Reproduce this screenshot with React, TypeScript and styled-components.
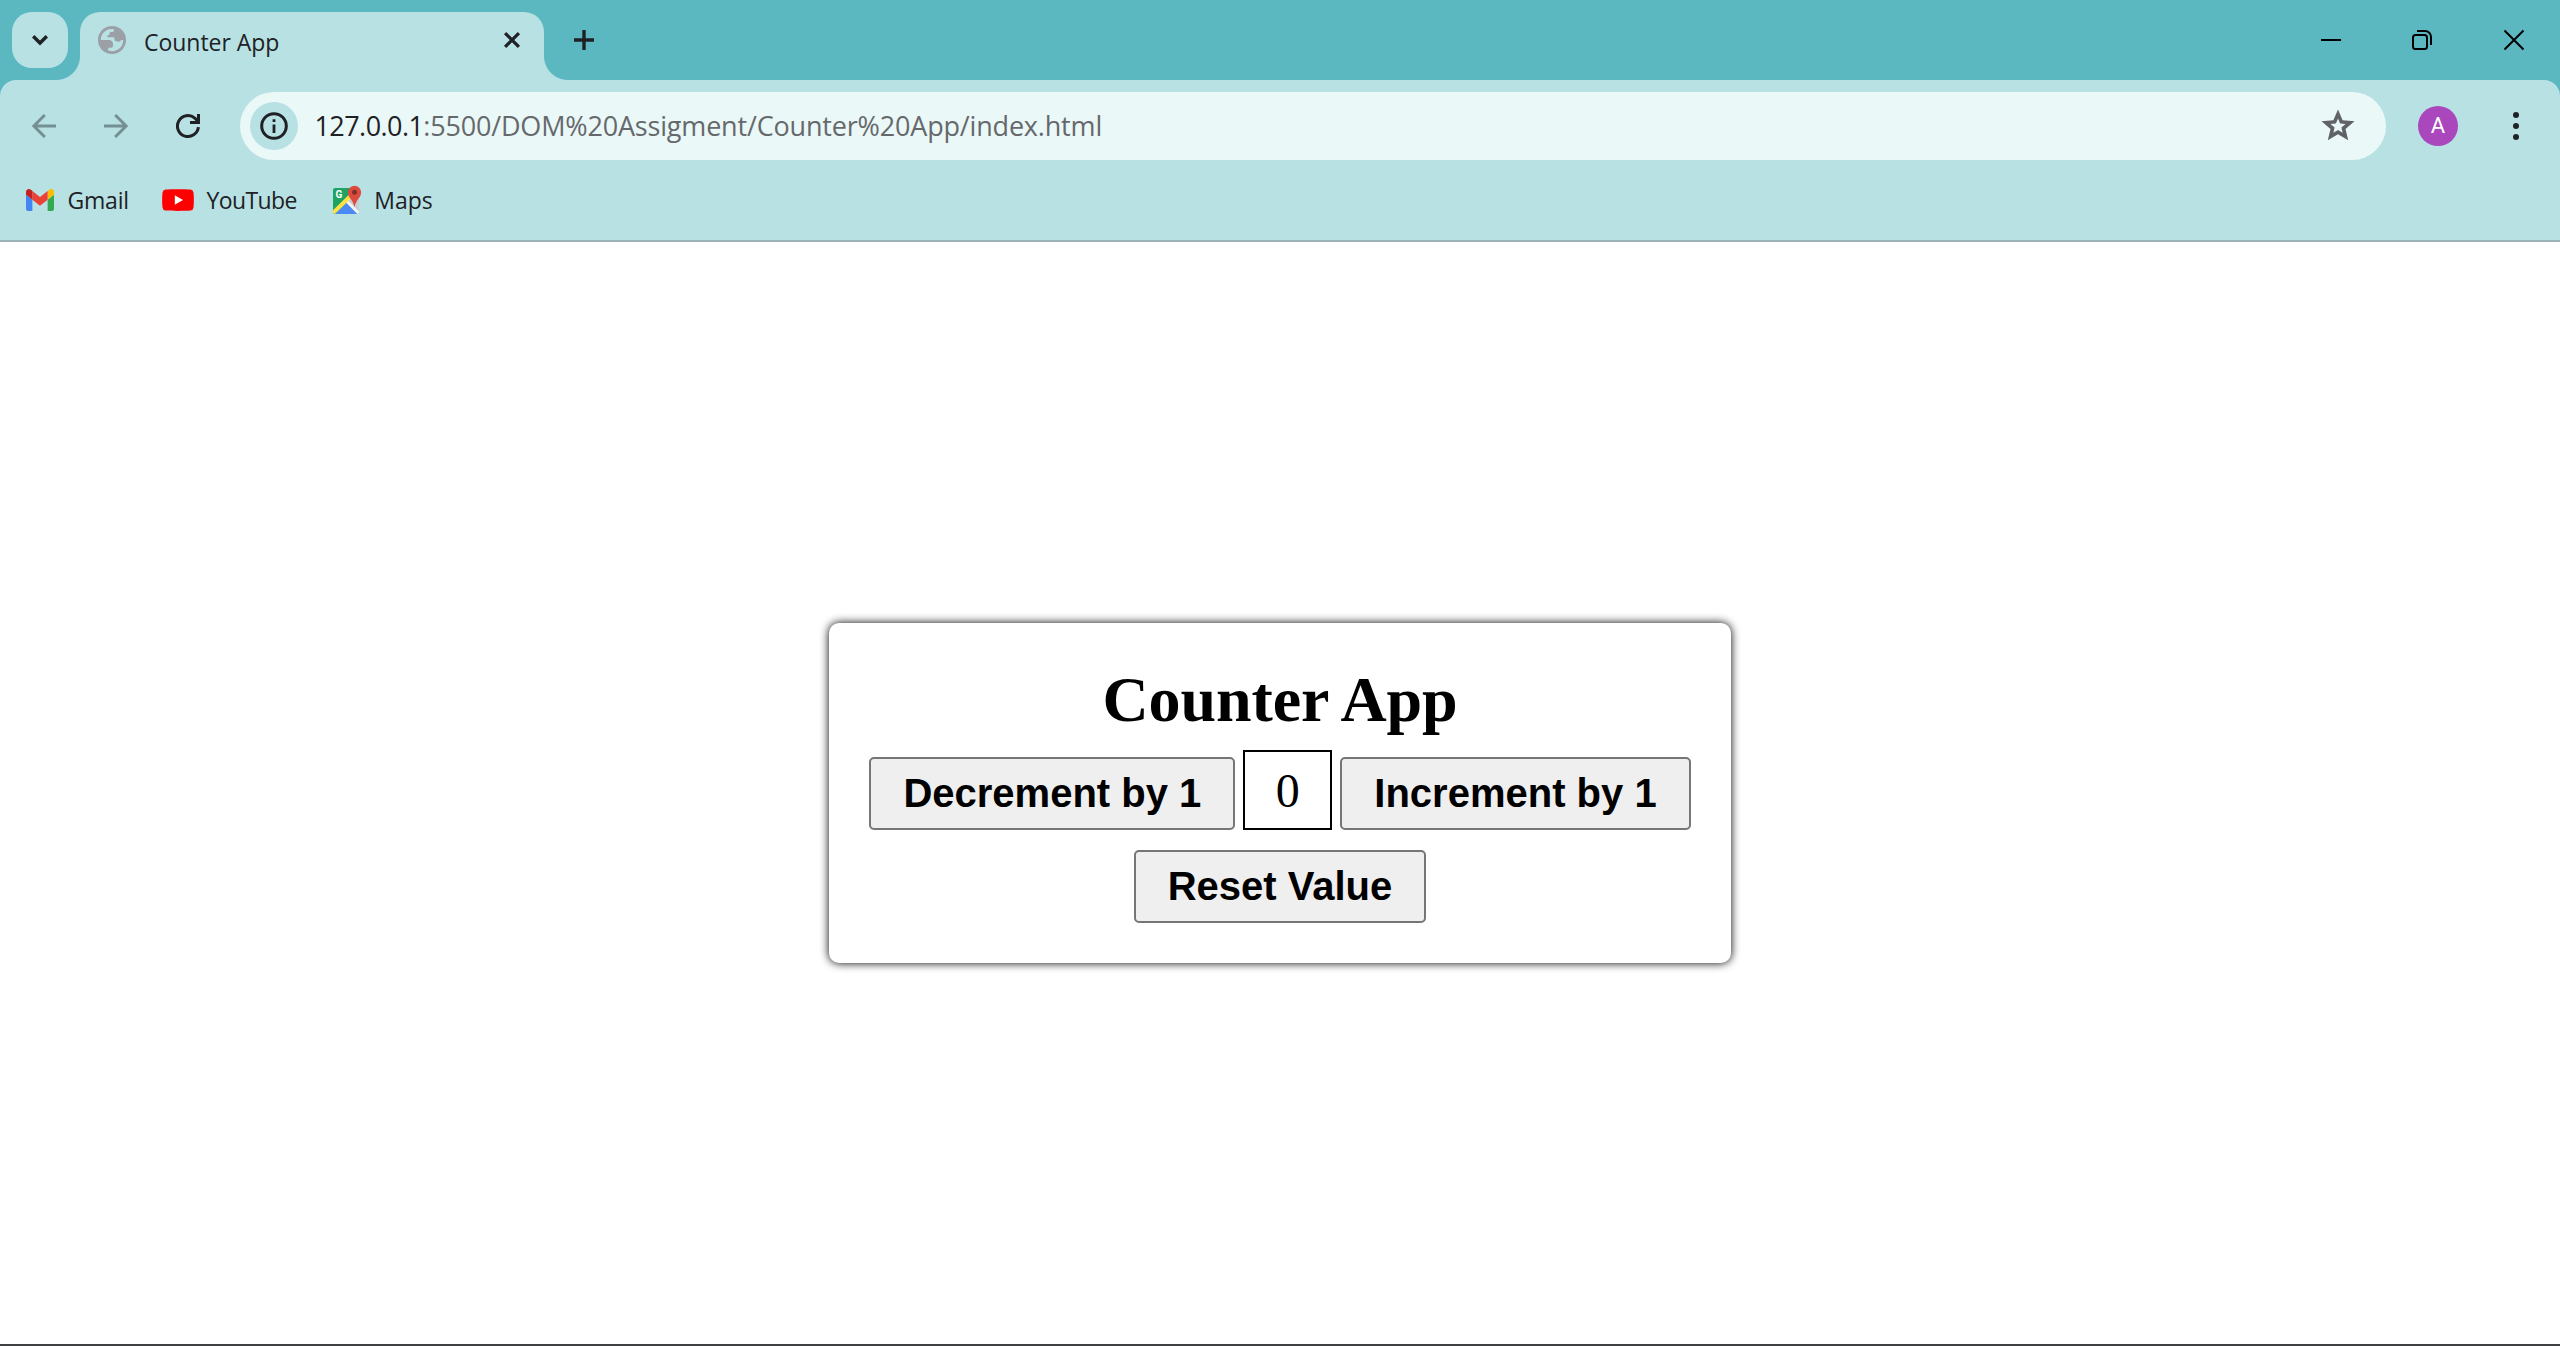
import React, { useState } from 'react';
import styled, { createGlobalStyle } from 'styled-components';

const color = {
  frame: '#5bb8c1',
  surface: '#b8e1e4',
  field: '#ebf8f8',
  ink: '#202124',
  muted: '#5f6368',
  disabled: '#768f92',
};

const uiFont = '"Open Sans", "Noto Sans", sans-serif';

const GlobalStyle = createGlobalStyle`
  * { box-sizing: border-box; }
  html, body { margin: 0; padding: 0; }
  body { background: #fff; overflow: hidden; }
  svg { display: block; flex: none; overflow: visible; }
`;

const Window = styled.div`
  display: flex;
  flex-direction: column;
  width: 2560px;
  height: 1346px;
  background: #fff;
  border-bottom: 2px solid #3f4042;
`;

const TabStrip = styled.header`
  display: flex;
  align-items: flex-start;
  height: 80px;
  padding-left: 12px;
  background: ${color.frame};
`;

const TabSearch = styled.button`
  display: flex;
  align-items: center;
  justify-content: center;
  width: 56px;
  height: 56px;
  margin: 12px 12px 0 0;
  padding: 0;
  border: 0;
  border-radius: 20px;
  background: ${color.surface};
`;

const Tab = styled.div`
  position: relative;
  display: flex;
  align-items: center;
  width: 464px;
  height: 68px;
  margin-top: 12px;
  padding: 0 24px 12px 18px;
  border-radius: 20px 20px 0 0;
  background: ${color.surface};

  &::before,
  &::after {
    content: '';
    position: absolute;
    bottom: 0;
    width: 24px;
    height: 24px;
  }
  &::before {
    right: 100%;
    background: radial-gradient(circle at 0 0, transparent 23.5px, ${color.surface} 24.5px);
  }
  &::after {
    left: 100%;
    background: radial-gradient(circle at 100% 0, transparent 23.5px, ${color.surface} 24.5px);
  }
`;

const TabTitle = styled.span`
  flex: 1;
  padding: 3px 0 0 18px;
  font: 400 23px/30px ${uiFont};
  letter-spacing: -0.03px;
  color: ${color.ink};
`;

const NewTab = styled.button`
  display: flex;
  align-items: center;
  justify-content: center;
  width: 56px;
  height: 56px;
  margin: 12px 0 0 12px;
  padding: 0;
  border: 0;
  background: none;
`;

const WindowControls = styled.div`
  display: flex;
  margin-left: auto;
`;

const WindowButton = styled.button`
  display: flex;
  align-items: center;
  justify-content: center;
  width: 92px;
  height: 80px;
  padding: 0;
  border: 0;
  background: none;
`;

const ToolbarBackdrop = styled.div`
  background: ${color.frame};
`;

const ToolbarPanel = styled.div`
  border-bottom: 2px solid #9ab3b7;
  border-radius: 16px 16px 0 0;
  background: ${color.surface};
`;

const NavigationBar = styled.div`
  display: flex;
  align-items: center;
  height: 80px;
  padding: 12px 8px 0;
`;

const NavButton = styled.button`
  display: flex;
  align-items: center;
  justify-content: center;
  width: 72px;
  height: 68px;
  padding: 0;
  border: 0;
  background: none;
`;

const AddressBar = styled.div`
  display: flex;
  flex: 1;
  align-items: center;
  height: 68px;
  margin: 0 32px 0 16px;
  padding: 0 28px 0 10px;
  border-radius: 34px;
  background: ${color.field};
`;

const SiteInfo = styled.span`
  display: flex;
  align-items: center;
  justify-content: center;
  width: 48px;
  height: 48px;
  margin-right: 16.5px;
  border-radius: 50%;
  background: ${color.surface};
`;

const Url = styled.div`
  flex: 1;
  font: 400 27px/36px ${uiFont};
  white-space: nowrap;
  color: #66696c;
  letter-spacing: -0.18px;
`;

const UrlHost = styled.span`
  color: ${color.ink};
  letter-spacing: -0.57px;
`;

const Avatar = styled.span`
  display: flex;
  align-items: center;
  justify-content: center;
  width: 40px;
  height: 40px;
  border-radius: 50%;
  background: #ab47bc;
  font: 400 22px/40px Roboto, sans-serif;
  color: #fff;
`;

const MenuButton = styled(NavButton)`
  width: 72px;
  margin-left: 22px;
`;

const BookmarksBar = styled.nav`
  display: flex;
  align-items: center;
  height: 80px;
  padding-left: 26px;
`;

const Bookmark = styled.a<{ $gap: number; $tracking?: number; $after?: number }>`
  display: flex;
  align-items: center;
  gap: ${(p) => p.$gap}px;
  margin-right: ${(p) => p.$after ?? 0}px;
  font: 400 23px/32px ${uiFont};
  letter-spacing: ${(p) => p.$tracking ?? 0}px;
  color: ${color.ink};
`;

const BookmarkLabel = styled.span`
  padding-bottom: 1px;
`;

const Page = styled.main`
  display: flex;
  flex: 1;
  align-items: center;
  justify-content: center;
  background: #fff;
`;

const Card = styled.section`
  display: flex;
  flex-direction: column;
  align-items: center;
  width: 902px;
  height: 340px;
  padding-top: 40px;
  border-radius: 10px;
  background: #fff;
  box-shadow: 0 0 10px #000;
`;

const Heading = styled.h1`
  margin: 0 0 13px;
  font: 700 64px/74px "Liberation Serif", "Times New Roman", serif;
  letter-spacing: -0.1px;
  color: #000;
`;

const CounterRow = styled.div`
  display: flex;
  align-items: flex-end;
  gap: 8px;
  margin-bottom: 20px;
`;

const ActionButton = styled.button`
  height: 73px;
  padding: 0 32px 2px;
  border: 2px solid #767676;
  border-radius: 5px;
  background: #efefef;
  font: 700 40px/46px "Liberation Sans", Arial, sans-serif;
  color: #000;
  white-space: nowrap;
`;

const CountBox = styled.output`
  display: flex;
  align-items: center;
  justify-content: center;
  width: 89px;
  height: 80px;
  padding-top: 2px;
  border: 2px solid #000;
  font: 400 48px/56px "Liberation Serif", "Times New Roman", serif;
  color: #000;
`;

const ChevronIcon = () => (
  <svg width="16" height="10" viewBox="0 0 16 10" fill="none" stroke={color.ink} strokeWidth="3.4">
    <path d="M1.2 1.2 8 8 14.8 1.2" />
  </svg>
);

const GlobeIcon = () => (
  <svg width="28" height="28" viewBox="0 0 28 28">
    <circle cx="14" cy="14" r="14" fill="#9aa0a6" />
    <path
      fill={color.surface}
      d="M2.8 13.4C3 8.4 6.4 4.4 11 3.2L15.8 3C16.3 4.8 15.8 6 14 6.1H12.2C11.3 6.6 12 8.7 11 9.3H9.4V11.3H15.3C16.6 11.5 16.6 12.6 16.7 14.6C18.2 15.6 20.5 15.8 22 15.5L23 14H25.2C25.2 20.6 20 25.4 13.6 25.2L10.2 24.6V21.8H13.2C15 21.6 15 20 15 18.2C15 16.4 14 14.6 12 14H2.8Z"
    />
  </svg>
);

const TabCloseIcon = () => (
  <svg width="16" height="16" viewBox="0 0 16 16" stroke={color.ink} strokeWidth="3.2">
    <path d="M1.1 1.1 14.9 14.9M14.9 1.1 1.1 14.9" />
  </svg>
);

const PlusIcon = () => (
  <svg width="20" height="20" viewBox="0 0 20 20" stroke={color.ink} strokeWidth="3.4">
    <path d="M10 0V20M0 10H20" />
  </svg>
);

const MinimizeIcon = () => (
  <svg width="20" height="20" viewBox="-1 0 20 20">
    <path d="M0 10H20" stroke="#000" strokeWidth="2" />
  </svg>
);

const RestoreIcon = () => (
  <svg width="20" height="20" viewBox="0 0 20 20" fill="none" stroke="#000" strokeWidth="2">
    <rect x="1" y="5" width="14" height="14" rx="2.5" />
    <path d="M5 1H13A6 6 0 0 1 19 7V15" />
  </svg>
);

const WindowCloseIcon = () => (
  <svg width="20" height="20" viewBox="0 0 20 20" stroke="#000" strokeWidth="2">
    <path d="M.5.5 19.5 19.5M19.5.5.5 19.5" />
  </svg>
);

const ArrowIcon = ({ flipped = false }: { flipped?: boolean }) => (
  <svg width="24" height="24" viewBox="0 0 24 24" fill="none" stroke={color.disabled} strokeWidth="3">
    <path
      transform={flipped ? 'matrix(-1 0 0 1 24 0)' : undefined}
      d="M24 12H2M12.8 1 1.9 12 12.8 23"
    />
  </svg>
);

const ReloadIcon = () => (
  <svg width="24" height="24" viewBox="0 0 24 24" fill="none" stroke={color.ink} strokeWidth="3">
    <path d="M22.4 13.2A10.5 10.5 0 1 1 18.8 4.1L22 7.3" />
    <path d="M22.5 0V8.5H14" />
  </svg>
);

const InfoIcon = () => (
  <svg width="28" height="28" viewBox="0 0 28 28">
    <circle cx="14" cy="14" r="12.3" fill="none" stroke={color.ink} strokeWidth="3" />
    <path d="M14 12.5V21M14 7.2V10" stroke={color.ink} strokeWidth="2.8" />
  </svg>
);

const starPath =
  'M22 9.24l-7.19-.62L12 2 9.19 8.63 2 9.24l5.46 4.73L5.82 21 12 17.27 18.18 21l-1.63-7.03z';

const StarIcon = () => (
  <svg width="40" height="40" viewBox="0 0 40 40">
    <path fill={color.muted} transform="translate(.2 .3) scale(1.65 1.62)" d={starPath} />
    <path fill={color.field} transform="translate(11 11.1) scale(.75 .74)" d={starPath} />
  </svg>
);

const MenuIcon = () => (
  <svg width="6" height="28" viewBox="0 0 6 28" fill={color.ink}>
    <circle cx="3" cy="3" r="3" />
    <circle cx="3" cy="14" r="3" />
    <circle cx="3" cy="25" r="3" />
  </svg>
);

const GmailIcon = () => (
  <svg width="28" height="22" viewBox="52 42 88 66" preserveAspectRatio="none">
    <path fill="#4285f4" d="M58 108h14V74L52 59v43c0 3.32 2.69 6 6 6" />
    <path fill="#34a853" d="M120 108h14c3.32 0 6-2.69 6-6V59l-20 15" />
    <path fill="#fbbc04" d="M120 48v26l20-15v-8c0-7.42-8.47-11.65-14.4-7.2" />
    <path fill="#ea4335" d="M72 74V48l24 18 24-18v26L96 92" />
    <path fill="#c5221f" d="M52 51v8l20 15V48l-5.6-4.2c-5.94-4.45-14.4-.22-14.4 7.2" />
  </svg>
);

const YouTubeIcon = () => (
  <svg width="32" height="22" viewBox="0 0 32 22">
    <path
      fill="#f00"
      d="M3.5.5C9 0 23 0 28.5.5Q31.2.8 31.5 3.5C32 8 32 14 31.5 18.5Q31.2 21.2 28.5 21.5C23 22 9 22 3.5 21.5Q.8 21.2.5 18.5C0 14 0 8 .5 3.5Q.8.8 3.5.5Z"
    />
    <path fill="#fff" d="M12.8 6.3V15.7L21 11Z" />
  </svg>
);

const MapsIcon = () => (
  <svg width="28" height="30" viewBox="0 0 28 30">
    <defs>
      <clipPath id="map-tile">
        <rect x="0" y="3" width="26" height="26" rx="2" />
      </clipPath>
    </defs>
    <g clipPath="url(#map-tile)">
      <rect y="3" width="26" height="26" fill="#1ea362" />
      <path fill="#c9cdd2" d="M14 15 26 5V29H20Z" />
      <path fill="#4a8af4" d="M0 31 14 17 27 31Z" />
      <path d="M13.5 16 26.5 29" stroke="#f1f3f4" strokeWidth="3" />
      <path d="M-1 29 17 11.5" stroke="#ffe047" strokeWidth="4" />
    </g>
    <text x="2.5" y="12.8" fill="#fff" fontFamily="Roboto, sans-serif" fontSize="10" fontWeight="700">
      G
    </text>
    <path
      fill="#dd4b3e"
      d="M21.5 .8A6.6 6.6 0 0 1 28.1 7.4C28.1 12.5 22.8 14.5 21.5 22.3 20.2 14.5 14.9 12.5 14.9 7.4A6.6 6.6 0 0 1 21.5 .8Z"
    />
    <circle cx="21.5" cy="7.3" r="2.5" fill="#822f2b" />
  </svg>
);

export default function App() {
  const [count, setCount] = useState(0);

  return (
    <>
      <GlobalStyle />
      <Window>
        <TabStrip>
          <TabSearch>
            <ChevronIcon />
          </TabSearch>
          <Tab>
            <GlobeIcon />
            <TabTitle>Counter App</TabTitle>
            <TabCloseIcon />
          </Tab>
          <NewTab>
            <PlusIcon />
          </NewTab>
          <WindowControls>
            <WindowButton>
              <MinimizeIcon />
            </WindowButton>
            <WindowButton>
              <RestoreIcon />
            </WindowButton>
            <WindowButton>
              <WindowCloseIcon />
            </WindowButton>
          </WindowControls>
        </TabStrip>

        <ToolbarBackdrop>
          <ToolbarPanel>
            <NavigationBar>
              <NavButton>
                <ArrowIcon />
              </NavButton>
              <NavButton>
                <ArrowIcon flipped />
              </NavButton>
              <NavButton>
                <ReloadIcon />
              </NavButton>
              <AddressBar>
                <SiteInfo>
                  <InfoIcon />
                </SiteInfo>
                <Url>
                  <UrlHost>127.0.0.1</UrlHost>:5500/DOM%20Assigment/Counter%20App/index.html
                </Url>
                <StarIcon />
              </AddressBar>
              <Avatar>A</Avatar>
              <MenuButton>
                <MenuIcon />
              </MenuButton>
            </NavigationBar>
            <BookmarksBar>
              <Bookmark $gap={13.5} $tracking={-0.2} $after={33}>
                <GmailIcon />
                <BookmarkLabel>Gmail</BookmarkLabel>
              </Bookmark>
              <Bookmark $gap={12.5} $tracking={-0.6} $after={36.5}>
                <YouTubeIcon />
                <BookmarkLabel>YouTube</BookmarkLabel>
              </Bookmark>
              <Bookmark $gap={13}>
                <MapsIcon />
                <BookmarkLabel>Maps</BookmarkLabel>
              </Bookmark>
            </BookmarksBar>
          </ToolbarPanel>
        </ToolbarBackdrop>

        <Page>
          <Card>
            <Heading>Counter App</Heading>
            <CounterRow>
              <ActionButton onClick={() => setCount(count - 1)}>Decrement by 1</ActionButton>
              <CountBox>{count}</CountBox>
              <ActionButton onClick={() => setCount(count + 1)}>Increment by 1</ActionButton>
            </CounterRow>
            <ActionButton onClick={() => setCount(0)}>Reset Value</ActionButton>
          </Card>
        </Page>
      </Window>
    </>
  );
}
